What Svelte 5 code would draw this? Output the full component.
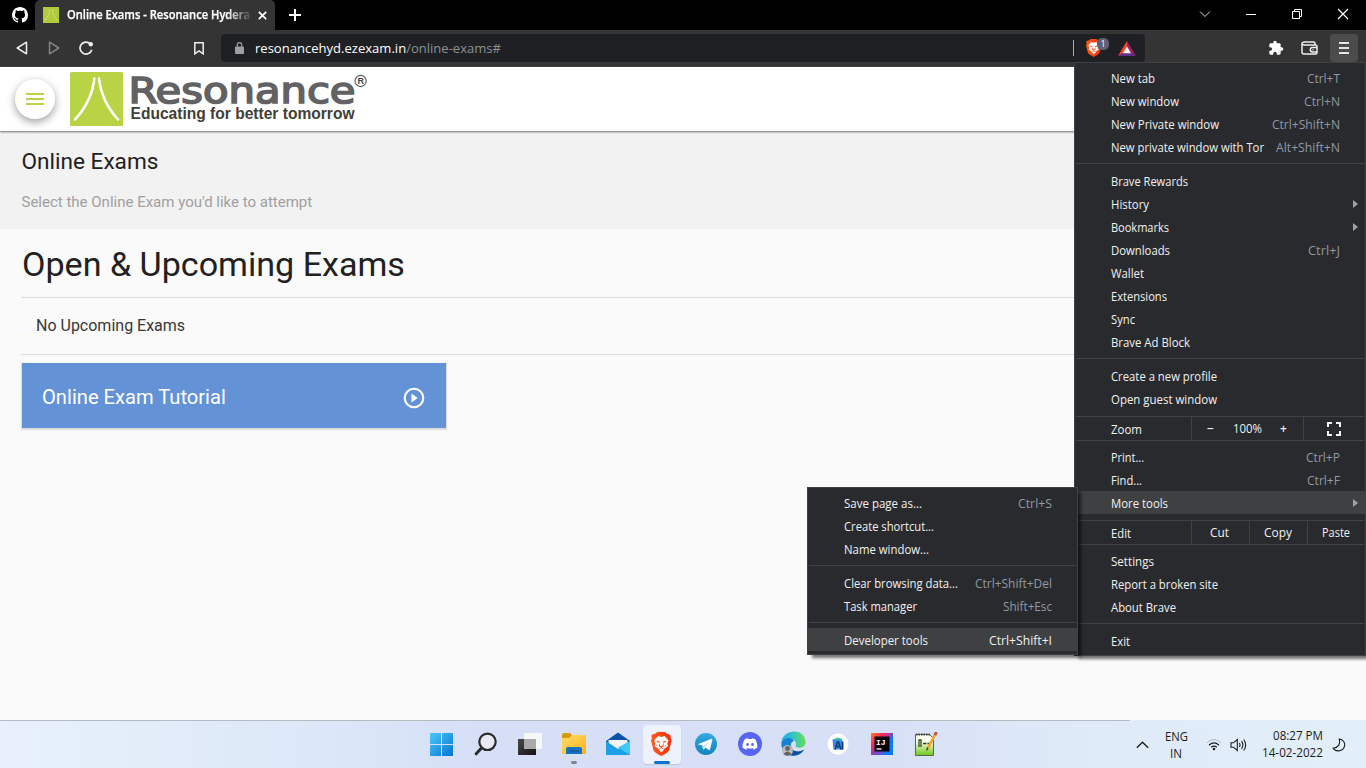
<script>
  const mainMenu = [
    { label: 'New tab', key: 'Ctrl+T', w: 44, kw: 33 },
    { label: 'New window', key: 'Ctrl+N', w: 68, kw: 36 },
    { label: 'New Private window', key: 'Ctrl+Shift+N', w: 108, kw: 68 },
    { label: 'New private window with Tor', key: 'Alt+Shift+N', w: 153, kw: 64 },
    { type: 'sep' },
    { label: 'Brave Rewards', w: 77 },
    { label: 'History', arrow: true, w: 38 },
    { label: 'Bookmarks', arrow: true, w: 58 },
    { label: 'Downloads', key: 'Ctrl+J', w: 59, kw: 32 },
    { label: 'Wallet', w: 33 },
    { label: 'Extensions', w: 56 },
    { label: 'Sync', w: 24 },
    { label: 'Brave Ad Block', w: 79 },
    { type: 'sep' },
    { label: 'Create a new profile', w: 106 },
    { label: 'Open guest window', w: 106 },
    { type: 'zoom' },
    { label: 'Print...', key: 'Ctrl+P', w: 33, kw: 34 },
    { label: 'Find...', key: 'Ctrl+F', w: 31, kw: 33 },
    { label: 'More tools', arrow: true, active: true, w: 57 },
    { type: 'edit' },
    { label: 'Settings', w: 43 },
    { label: 'Report a broken site', w: 107 },
    { label: 'About Brave', w: 65 },
    { type: 'sep' },
    { label: 'Exit', w: 19 }
  ];
  const subMenu = [
    { label: 'Save page as...', key: 'Ctrl+S', w: 78, kw: 34 },
    { label: 'Create shortcut...', w: 90 },
    { label: 'Name window...', w: 85 },
    { type: 'sep' },
    { label: 'Clear browsing data...', key: 'Ctrl+Shift+Del', w: 114, kw: 77 },
    { label: 'Task manager', key: 'Shift+Esc', w: 73, kw: 49 },
    { type: 'sep' },
    { label: 'Developer tools', key: 'Ctrl+Shift+I', active: true, w: 84, kw: 63 }
  ];
</script>

{#snippet fit(text, w)}
  <svg class="fit" width={w} height="17"><text x="0" y="13" textLength={w} lengthAdjust="spacingAndGlyphs">{text}</text></svg>
{/snippet}

{#snippet rows(items)}
  {#each items as it}
    {#if it.type === 'sep'}
      <div class="sep"></div>
    {:else if it.type === 'zoom'}
      <div class="split">
        <div class="name">{@render fit('Zoom', 31)}</div>
        <div class="zoomer"><span class="sign">−</span>{@render fit('100%', 29)}<span class="sign">+</span></div>
        <div class="full">
          <svg width="14" height="14" viewBox="0 0 14 14" fill="none" stroke="#f1f1f1" stroke-width="2"><path d="M1 5V1h4M9 1h4v4M13 9v4H9M5 13H1V9" /></svg>
        </div>
      </div>
    {:else if it.type === 'edit'}
      <div class="split">
        <div class="name">{@render fit('Edit', 20)}</div>
        <div class="act">{@render fit('Cut', 19)}</div>
        <div class="act">{@render fit('Copy', 28)}</div>
        <div class="act">{@render fit('Paste', 28)}</div>
      </div>
    {:else}
      <div class="item" class:active={it.active}>
        {@render fit(it.label, it.w)}
        {#if it.key}<span class="key">{@render fit(it.key, it.kw)}</span>{/if}
        {#if it.arrow}<i class="arrow"></i>{/if}
      </div>
    {/if}
  {/each}
{/snippet}

{#snippet brave(size)}
  <svg width={size * 0.86} height={size} viewBox="0 0 24 28">
    <defs><linearGradient id="bg{size}" x1="0" x2="1"><stop offset="0" stop-color="#ff5a1c" /><stop offset="1" stop-color="#f6330c" /></linearGradient></defs>
    <path fill="url(#bg{size})" d="M7.500 0h9l2.300 2.400c1.600-.4 2.700.4 4 2L23 7l1 3-3 11.500C20 24 15 26.500 12 28 9 26.500 4 24 3 21.500L0 10l1-3-.8-2.600c1.300-1.600 2.400-2.400 4-2z" />
    <path fill="#fff" d="M12 5.700l3.800-1 4.600 5.200-1.500 3.600 1 2.700-5 3.500L12 17.500l-2.900 2.200-5-3.500 1-2.700-1.500-3.600 4.600-5.200z" />
    <path fill="#fff" d="M12 18.700l3.300 2-3.300 2.900-3.300-2.900z" />
    <path fill="#f8410f" d="M6 10.200l4.200.9-.5 1.500-2.300-.5zM18 10.200l-4.200.9.500 1.500 2.300-.5zM9.600 12.600l.9 3.100 1.500.9 1.500-.9.900-3.100.4 3.700-2.800 1.800-2.800-1.800zM5.700 14.300l2.500 2.200-1.800-.5zM18.300 14.300l-2.500 2.200 1.800-.5z" />
  </svg>
{/snippet}

<div class="screen">
  <div class="tabs">
    <div class="pinned">
      <svg width="16" height="16" viewBox="0 0 16 16" fill="#fff"><path d="M8 0C3.580 0 0 3.580 0 8c0 3.540 2.290 6.530 5.470 7.590.4.070.55-.17.55-.38 0-.19-.01-.82-.01-1.490-2.010.37-2.530-.49-2.690-.94-.09-.23-.48-.94-.82-1.130-.28-.15-.68-.52-.01-.53.63-.01 1.080.58 1.230.82.72 1.210 1.870.87 2.330.66.07-.52.28-.87.51-1.070-1.780-.2-3.640-.89-3.640-3.950 0-.87.31-1.590.82-2.150-.08-.2-.36-1.020.08-2.120 0 0 .67-.21 2.200.82.64-.18 1.320-.27 2-.27s1.360.09 2 .27c1.530-1.040 2.200-.82 2.200-.82.44 1.100.16 1.920.08 2.120.51.56.82 1.270.82 2.150 0 3.070-1.870 3.750-3.650 3.950.29.25.54.73.54 1.480 0 1.070-.01 1.930-.01 2.200 0 .21.15.46.55.38A8.010 8.010 0 0 0 16 8c0-4.420-3.580-8-8-8z" /></svg>
    </div>
    <div class="tab">
      <svg width="16" height="16" viewBox="0 0 16 16"><rect width="16" height="16" fill="#b0cb3a" /><path d="M6.800 2.500Q6.500 8 1.800 13.500M9.200 2.500Q9.500 8 14.200 13.500" fill="none" stroke="#dfe9ad" stroke-dasharray="1.500 .7" /></svg>
      <div class="title"><svg class="fit" width="183" height="18"><text x="0" y="13" textLength="183" lengthAdjust="spacingAndGlyphs">Online Exams - Resonance Hydera</text></svg></div>
      <svg width="9" height="9" viewBox="0 0 9 9" stroke="#fff" stroke-width="1.700"><path d="M.8.8l7.400 7.400M8.200.8L.8 8.200" /></svg>
    </div>
    <svg class="plus" width="12" height="12" viewBox="0 0 12 12" stroke="#fff" stroke-width="2"><path d="M6 0v12M0 6h12" /></svg>
    <div class="winctl">
      <svg width="12" height="12" viewBox="0 0 12 12" fill="none" stroke="#ddd"><path d="M1 3.500l5 5 5-5" /></svg>
      <svg width="12" height="12" viewBox="0 0 12 12" stroke="#fff"><path d="M1 6.500h10" /></svg>
      <svg width="12" height="12" viewBox="0 0 12 12" fill="none" stroke="#fff"><path d="M1.500 3.500h7v7h-7zM3.500 3.500v-2h7v7h-2" /></svg>
      <svg width="12" height="12" viewBox="0 0 12 12" stroke="#fff" stroke-width="1.200"><path d="M1 1l10 10M11 1L1 11" /></svg>
    </div>
  </div>

  <div class="toolbar">
    <div class="nav">
      <svg width="12" height="14" viewBox="0 0 12 14" fill="none" stroke="#eee" stroke-width="1.500" stroke-linejoin="round"><path d="M10.500 1.200v11.600L1.200 7z" /></svg>
      <svg width="12" height="14" viewBox="0 0 12 14" fill="none" stroke="#858585" stroke-width="1.500" stroke-linejoin="round"><path d="M1.500 1.200v11.600L10.800 7z" /></svg>
      <svg width="14" height="14" viewBox="0 0 14 14" fill="none" stroke="#eee" stroke-width="1.700"><path d="M12.800 8.800A6 6 0 1 1 11.300 2.800" /><circle cx="11.800" cy="3.300" r="2.200" fill="#eee" stroke="none" /></svg>
    </div>
    <svg class="mark" width="10" height="13" viewBox="0 0 10 13" fill="none" stroke="#eee" stroke-width="1.500"><path d="M.8.800h8.400v11L5 8.800.8 11.800z" /></svg>
    <div class="url">
      <svg class="lock" width="9" height="12" viewBox="0 0 9 12"><rect y="4.500" width="9" height="7.500" rx="1" fill="#9aa0a6" /><path d="M2.300 5V2.800a2.200 2.200 0 0 1 4.400 0V5" fill="none" stroke="#9aa0a6" stroke-width="1.200" /></svg>
      <svg class="fit addr" width="248" height="20"><text x="0" y="15" textLength="246" lengthAdjust="spacingAndGlyphs">resonancehyd.ezexam.in<tspan fill="#8d9093">/online-exams#</tspan></text></svg>
      <div class="shields">
        {@render brave(18)}
        <span class="badge">1</span>
      </div>
      <svg class="bat" width="18" height="15" viewBox="0 0 18 15"><path d="M9 0L0 15l9-5.200z" fill="#ff4724" /><path d="M9 0l9 15-9-5.200z" fill="#9e1f63" /><path d="M0 15h18L9 9.500z" fill="#662d91" /><path d="M9 5.500l4 6.800H5z" fill="#fff" /></svg>
    </div>
    <div class="ext">
      <svg width="16" height="16" viewBox="0 0 24 24" fill="#fff"><path d="M20.500 11H19V7c0-1.100-.9-2-2-2h-4V3.500a2.500 2.500 0 0 0-5 0V5H4c-1.100 0-1.990.9-1.990 2v3.800H3.500a2.700 2.700 0 0 1 0 5.400H2V20c0 1.100.9 2 2 2h3.800v-1.500a2.700 2.700 0 0 1 5.400 0V22H17c1.100 0 2-.9 2-2v-4h1.500a2.500 2.500 0 0 0 0-5z" /></svg>
      <svg width="17" height="14" viewBox="0 0 17 14" fill="none" stroke="#eee" stroke-width="1.500"><path d="M14 4V2.500Q14 1 12.500 1h-9Q1 1 1 3v8q0 2 2 2h11.500q1.500 0 1.500-1.500v-6Q16 4 14.500 4h-11Q1 4 1 2.500" /><path d="M16 6.500h-4.500a2.200 2.200 0 0 0 0 4.400H16M11.500 8.700h1" /></svg>
      <div class="burger"><i></i><i></i><i></i></div>
    </div>
  </div>

  <main>
    <header>
      <div class="round"><i></i><i></i><i></i></div>
      <svg class="logo" width="300" height="56" viewBox="0 0 300 56">
        <rect x="0" y="1" width="53" height="54" rx="1.500" fill="#b8d444" />
        <path d="M24.300 7.500Q22 30 5 48.500M29 7.500Q31.300 30 48 48.500" fill="none" stroke="#fff" stroke-width="2.500" stroke-linecap="round" />
        <text class="word" x="58.500" y="32" textLength="227" lengthAdjust="spacingAndGlyphs">Resonance</text>
        <text class="motto" x="60.500" y="48" textLength="224" lengthAdjust="spacingAndGlyphs">Educating for better tomorrow</text>
        <circle cx="290.600" cy="10" r="5.600" fill="none" stroke="#555" stroke-width="1.100" />
        <text class="reg" x="290.800" y="13.400">R</text>
      </svg>
    </header>
    <section class="hero">
      <h2>Online Exams</h2>
      <p>Select the Online Exam you'd like to attempt</p>
    </section>
    <section class="content">
      <h1>Open &amp; Upcoming Exams</h1>
      <div class="none">No Upcoming Exams</div>
      <div class="card">
        <span>Online Exam Tutorial</span>
        <svg width="22" height="22" viewBox="0 0 22 22"><circle cx="11" cy="11" r="9.300" fill="none" stroke="#fff" stroke-width="2.100" /><path d="M8.500 6.500v9l6.200-4.500z" fill="#fff" /></svg>
      </div>
    </section>
  </main>

  <footer>
    <div class="apps">
      <div class="app"><svg width="24" height="24" viewBox="0 0 24 24"><defs><linearGradient id="win" x1="0" y1="0" x2="1" y2="1" ><stop offset="0" stop-color="#4cc9fb" /><stop offset="1" stop-color="#0574d1" /></linearGradient></defs><path fill="url(#win)" d="M0 1h11v11H0zM12 1h11v11H12zM0 13h11v11H0zM12 13h11v11H12z" /></svg></div>
      <div class="app"><svg width="24" height="24" viewBox="0 0 24 24" fill="none" stroke="#2b2b2e"><circle cx="13.500" cy="9.800" r="8.200" stroke-width="2.200" fill="#e7eaf5" /><path d="M7.500 16l-5.300 5.800" stroke-width="3" stroke-linecap="round" /></svg></div>
      <div class="app"><svg width="26" height="24" viewBox="0 0 26 24"><defs><linearGradient id="tk" x1="0" y1="0" x2="1" y2="1"><stop offset="0" stop-color="#4a4a4a" /><stop offset="1" stop-color="#111" /></linearGradient></defs><path d="M1 7h18v16H1z" fill="url(#tk)" /><path d="M7 1h18v16H7z" fill="#f7f7f7" /><path d="M7 7h12v10H7z" fill="#aaa" /></svg></div>
      <div class="app"><svg width="24" height="24" viewBox="0 0 24 24"><defs><linearGradient id="fo" x1="0" y1="0" x2="1" y2="1"><stop offset="0" stop-color="#ffdb6e" /><stop offset="1" stop-color="#fbb414" /></linearGradient></defs><path d="M0 3q0-2 2-2h6l3 3h-1L8 7H0z" fill="#d99a08" /><path d="M0 6h7l3-3h13q1 0 1 1v18H0z" fill="url(#fo)" /><path d="M4 22v-5q0-2 2-2h12q2 0 2 2v5z" fill="#1572c2" /><path d="M7 18.500h10v1H7z" fill="#075191" /></svg><i class="dot"></i></div>
      <div class="app"><svg width="24" height="24" viewBox="0 0 24 24"><path d="M0 9l12-8.500L24 9v5H0z" fill="#0a55a8" /><path d="M2.500 8h19v5L12 18l-9.500-5z" fill="#f3f3f3" /><path d="M0 9l12 8L24 9v14H0z" fill="#1d9fe8" /><path d="M24 9v14L12 15.500z" fill="#3dc9f6" /></svg></div>
      <div class="app current">{@render brave(24)}<i class="run"></i></div>
      <div class="app"><svg width="24" height="24" viewBox="0 0 24 24"><defs><linearGradient id="tg" x2="0" y2="1"><stop offset="0" stop-color="#35a9e1" /><stop offset="1" stop-color="#1383bb" /></linearGradient></defs><circle cx="12" cy="12" r="11" fill="url(#tg)" /><path d="M4.500 12l13-5.200c.7-.2 1 .2.8 1L16 17.600c-.2.700-.7.800-1.200.4l-3.200-2.400-1.600 1.600c-.5.500-.9.100-1-.5l-.8-3.100-3.600-1c-.6-.2-.5-.4-.1-.6z" fill="#fff" /><path d="M9 14.200l6.200-4.800-4.300 5.200-.8 2.300z" fill="#b9d9ec" /></svg></div>
      <div class="app"><svg width="24" height="24" viewBox="0 0 24 24"><circle cx="12" cy="12" r="12" fill="#5865f2" /><g transform="translate(4.500 4.500) scale(.625)"><path fill="#fff" d="M20.317 4.370a19.800 19.800 0 0 0-4.885-1.515.07.07 0 0 0-.079.037c-.21.375-.444.864-.608 1.250a18.300 18.300 0 0 0-5.487 0 12.600 12.600 0 0 0-.617-1.250.08.08 0 0 0-.079-.037A19.700 19.700 0 0 0 3.677 4.370C.533 9.046-.320 13.580.099 18.058a20 20 0 0 0 5.993 3.030c.462-.630.874-1.295 1.226-1.994a13 13 0 0 1-1.872-.892l.372-.292c3.928 1.793 8.180 1.793 12.062 0l.372.292a12.300 12.300 0 0 1-1.873.892c.36.698.772 1.362 1.225 1.993a19.800 19.800 0 0 0 6.002-3.030c.5-5.177-.838-9.674-3.289-13.687zM8.020 15.330c-1.183 0-2.157-1.085-2.157-2.419s.956-2.419 2.157-2.419c1.210 0 2.176 1.096 2.157 2.420 0 1.333-.956 2.418-2.157 2.418zm7.975 0c-1.183 0-2.157-1.085-2.157-2.419s.955-2.419 2.157-2.419c1.210 0 2.176 1.096 2.157 2.420 0 1.333-.946 2.418-2.157 2.418z" /></g></svg></div>
      <div class="app"><svg width="25" height="25" viewBox="0 0 25 25"><defs><linearGradient id="ed" x1="0" x2="1"><stop offset="0" stop-color="#22a5e6" /><stop offset=".5" stop-color="#34c6c4" /><stop offset="1" stop-color="#65e04d" /></linearGradient></defs><path d="M.5 11C2-1.500 22-4 24.500 10c.8 5-3.500 7.500-8 6.500-3-.7-1.500-1.500-1.500-4C15 8 7 5 .5 11z" fill="url(#ed)" /><path d="M.5 11C4 6 11 6 13 10c-3 .5-4 4-2 7.500 3 4.500 8 4 12 1-4 8-15 8-19 3-3-3-4-6.500-3.500-10.500z" fill="#1682d3" /><path d="M9 13c0 8 9 9 14 5.500-3 5-9 6.500-13 5.500z" fill="#0c4fa0" /><circle cx="6.500" cy="19.500" r="5.500" fill="#b9babb" /><circle cx="6.500" cy="17.500" r="2.400" fill="#66625f" /><path d="M2.500 23q4-5 8 0-4 3.500-8 0z" fill="#66625f" /></svg></div>
      <div class="app"><svg width="24" height="24" viewBox="0 0 24 24"><circle cx="12" cy="12" r="10.500" fill="#fff" /><path d="M8 8V7q4-3 8 0v2H8z" fill="#3ddc84" /><path d="M6.500 7.500h8l3 2v8h-10z" fill="#3c86f2" /><path d="M9 17.500l2.500-7.500h1l2.500 7.500M10.500 14.500h3M16.500 10v7.500" fill="none" stroke="#163a5c" stroke-width="1.400" /></svg></div>
      <div class="app"><svg width="22" height="22" viewBox="0 0 22 22"><defs><linearGradient id="ij" x1="0" y1="0" x2="1" y2="1"><stop offset="0" stop-color="#fc801d" /><stop offset=".3" stop-color="#fe2857" /><stop offset=".55" stop-color="#7a47c9" /><stop offset="1" stop-color="#087cfa" /></linearGradient></defs><path d="M0 0h22v22H0z" fill="#087cfa" /><path d="M0 0h22L12 22H0z" fill="url(#ij)" /><path d="M3.500 3.500h15v15h-15z" fill="#080508" /><path d="M5.500 16h5" stroke="#fff" stroke-width="1.300" /><text x="5" y="11.500" class="ij">IJ</text></svg></div>
      <div class="app"><svg width="24" height="24" viewBox="0 0 24 24"><defs><linearGradient id="np" x2="0" y2="1"><stop offset=".3" stop-color="#fafff0" /><stop offset="1" stop-color="#6cc815" /></linearGradient></defs><path d="M1.500 2.500h14l4 4v17h-18z" fill="url(#np)" stroke="#5d6653" /><path d="M2 2.500h15" stroke="#444" stroke-width="2" stroke-dasharray="1.500 1" /><path d="M5 15V8h2v7M9 11.500h3.500M13.500 11.500h3" stroke="#334a25" stroke-width="1.300" fill="none" /><path d="M21.500 1.500l-8 15.500" stroke="#f2a826" stroke-width="2.700" /><path d="M22.500 0l-1.600 3" stroke="#c75340" stroke-width="3" /><path d="M13.700 15.500l-1 3" stroke="#333" stroke-width="1.200" /></svg></div>
    </div>
    <div class="tray">
      <svg width="13" height="8" viewBox="0 0 13 8" fill="none" stroke="#1c1c1c" stroke-width="1.300"><path d="M.8 6.800l5.700-5.600 5.700 5.600" /></svg>
      <div class="lang">{@render fit('ENG', 23)}{@render fit('IN', 12)}</div>
      <svg class="wifi" width="16" height="13" viewBox="0 0 16 13" fill="none" stroke="#1c1c1c"><path d="M1 4.800q7-6.600 14 0" stroke="#a9b3bb" /><path d="M3 7.200q5-4.600 10 0M5.200 9.300q2.800-2.400 5.600 0" stroke-width="1.200" /><circle cx="8" cy="11" r="1.300" fill="#1c1c1c" stroke="none" /></svg>
      <svg class="vol" width="17" height="14" viewBox="0 0 17 14" fill="none" stroke="#1c1c1c" stroke-width="1.100"><path d="M1 4.800h2.500L7.300 1.500v11L3.500 9.200H1zM9.300 5q1.500 2 0 4M11.500 3.200q2.800 3.800 0 7.600M13.700 1.500q4 5.500 0 11" /></svg>
      <div class="clock">{@render fit('08:27 PM', 50)}{@render fit('14-02-2022', 61)}</div>
      <svg class="moon" width="14" height="14" viewBox="0 0 14 14" fill="none" stroke="#1c1c1c" stroke-width="1.100"><path d="M7.300 1c4 .3 6 4 5.200 7.200C11.500 13 4.500 14.800 1.200 10.300 6 10 8.500 6 7.300 1z" /></svg>
    </div>
  </footer>

  <div class="menu primary">{@render rows(mainMenu)}</div>
  <div class="menu secondary">{@render rows(subMenu)}</div>
</div>

<style>
  :global(body) { margin: 0; overflow: hidden; }
  .screen { position: relative; width: 1366px; height: 768px; display: flex; flex-direction: column; overflow: hidden; font: 12px "Open Sans", "Noto Sans", sans-serif; background: #fafafa; }
  svg { display: block; flex: none; }
  .fit { overflow: visible; fill: currentColor; }

  .tabs { height: 30px; background: #000; display: flex; align-items: center; }
  .pinned { width: 35px; padding-left: 12px; box-sizing: border-box; }
  .tab { width: 240px; height: 30px; box-sizing: border-box; padding: 0 8px; display: flex; align-items: center; background: #343434; border-radius: 5px 5px 0 0; }
  .title { width: 183px; margin: 0 8px; color: #fff; mask-image: linear-gradient(90deg, #000 160px, transparent 186px); }
  .title text { font-weight: 600; stroke: #fff; stroke-width: .25; }
  .plus { margin-left: 14px; }
  .winctl { margin-left: auto; display: flex; gap: 34px; padding-right: 17px; margin-top: -2px; }

  .toolbar { height: 36px; background: #343434; border-bottom: 1px solid #444; display: flex; align-items: center; flex: none; }
  .nav { display: flex; align-items: center; gap: 20px; padding-left: 16px; }
  .nav svg:last-child { margin-left: -1px; }
  .mark { margin-left: 101px; }
  .url { width: 924px; height: 28px; margin-left: 17px; border-radius: 4px; background: #1e2023; display: flex; align-items: center; color: #fff; font-size: 13.500px; }
  .lock { margin-left: 14px; }
  .addr { margin-left: 11px; }
  .shields { margin-left: auto; height: 16px; border-left: 1px solid #aaa; display: flex; align-items: center; padding-left: 12px; position: relative; width: 32px; }
  .badge { position: absolute; left: 23px; top: -2px; width: 12px; height: 12px; border-radius: 5px; background: #5e6175; font: 9px/12px "Open Sans", sans-serif; text-align: center; }
  .bat { margin: 0 9px 0 0; }
  .ext { margin-left: auto; display: flex; align-items: center; gap: 17px; padding-right: 8px; }
  .burger { width: 28px; height: 28px; margin-left: -5px; border-radius: 4px; background: #4c4c4c; display: flex; flex-direction: column; align-items: center; justify-content: center; gap: 3px; }
  .burger i { width: 10px; height: 2px; background: #e6e6e6; }

  main { flex: 1; display: flex; flex-direction: column; font-family: Roboto, sans-serif; color: #212121; }
  header { position: relative; height: 64px; flex: none; background: #fff; box-shadow: 0 1px 2px rgba(0,0,0,.55); display: flex; align-items: center; z-index: 1; }
  .round { width: 40px; height: 40px; margin-left: 15px; border-radius: 50%; background: #fff; box-shadow: 0 3px 9px rgba(0,0,0,.38); display: flex; flex-direction: column; align-items: center; justify-content: center; gap: 3px; }
  .round i { width: 18px; height: 2px; background: #b8d444; }
  .logo { margin-left: 15px; overflow: visible; }
  .word { font: 400 36px "DejaVu Sans", sans-serif; fill: #626264; stroke: #626264; stroke-width: 1.700; }
  .motto { font: 700 16px "Liberation Sans", sans-serif; fill: #3f4038; }
  .reg { font: 700 9px "Liberation Sans", sans-serif; fill: #444; text-anchor: middle; }
  .hero { height: 98px; box-sizing: border-box; padding: 17px 21px 0 21.500px; background: #f2f2f2; }
  h2 { margin: 0; font-size: 22.600px; line-height: 28px; font-weight: 400; }
  .hero p { margin: 16px 0 0; font-size: 15px; line-height: 20px; color: #a0a0a0; }
  .content { padding: 12px 0 0 21px; }
  h1 { margin: 0; padding: 0 0 9px 1px; font-size: 34.100px; line-height: 47px; font-weight: 400; }
  .none { height: 56px; border: solid #ddd; border-width: 1px 0; padding-left: 15px; font-size: 16px; line-height: 56px; color: #383838; }
  .card { width: 424px; height: 65px; margin: 8px 0 0 1px; box-sizing: border-box; padding: 4px 21px 0 20px; display: flex; align-items: center; justify-content: space-between; background: #6392d6; box-shadow: 0 1px 1px 1px #dedede; color: #fff; font-size: 20.150px; }
  .card span { margin-top: -2px; }

  footer { position: relative; height: 47px; flex: none; border-top: 1px solid #b5bac3; background: linear-gradient(90deg, #e8f1fb 0, #dbe7f8 25%, #d6dff6 35%, #d8e0f6 65%, #deeaf8 78%, #e2eef9 100%); display: flex; align-items: center; }
  footer::after { content: ""; position: absolute; right: 0; top: -1px; width: 236px; height: 1px; background: #e2eef9; }
  .apps { display: flex; margin-left: 419.500px; }
  .app { position: relative; width: 44px; height: 47px; display: flex; align-items: center; justify-content: center; }
  .app::before { content: ""; position: absolute; z-index: 0; }
  .app.current::before { inset: 4px 3px; background: #edf2fc; border-radius: 4px; box-shadow: 0 1px 1px #bfc8d9; }
  .app svg { position: relative; top: -1px; }
  .dot, .run { position: absolute; bottom: 4px; width: 6px; height: 3px; border-radius: 2px; background: #7f858d; }
  .run { width: 16px; background: #0a73ce; }
  .current :global(svg) { position: relative; }
  .ij { font: 700 8px "Liberation Mono", monospace; fill: #fff; }
  .tray { margin-left: auto; padding-right: 20px; display: flex; align-items: center; color: #1c1c1c; }
  .lang { width: 44px; margin-left: 5px; display: flex; flex-direction: column; align-items: center; }
  .wifi { margin-left: 8px; }
  .vol { margin-left: 8px; }
  .clock { margin-left: 15px; margin-top: -1px; display: flex; flex-direction: column; align-items: flex-end; width: 61px; }
  .moon { margin-left: 9px; }

  .menu { position: absolute; box-sizing: border-box; background: #292a2d; border: 1px solid #3f4145; padding: 3px 0; color: #f1f1f1; box-shadow: 4px 4px 3px -1px rgba(0,0,0,.55); z-index: 5; }
  .primary { left: 1074px; top: 62px; width: 292px; height: 594px; }
  .secondary { left: 807px; top: 487px; width: 271px; height: 168px; }
  .item { height: 23px; display: flex; align-items: center; padding: 1px 25.500px 0 36px; box-sizing: border-box; position: relative; }
  .key { margin-left: auto; color: #9199a3; }
  .active { background: #3f4042; }
  .active .key { color: #f1f1f1; }
  .arrow { margin: 0 -18px 0 auto; border: 4px solid transparent; border-left: 5px solid #9ea1a5; border-right: 0; }
  .sep { height: 1px; margin: 5px 1px; background: #3f4145; }
  .split { height: 25px; box-sizing: border-box; margin: 6px 1px 4px; border: solid #3f4145; border-width: 1px 0; display: flex; }
  .split > div { display: flex; align-items: center; justify-content: center; }
  .split > div + div { border-left: 1px solid #3f4145; }
  .split .name { width: 115px; box-sizing: border-box; justify-content: flex-start; padding: 2px 0 0 35px; }
  .split .zoomer { width: 110px; gap: 18px; padding-right: 1px; }
  .sign { width: 8px; text-align: center; font-weight: 600; }
  .full { flex: 1; }
  .split .act { width: 55px; padding-right: 2px; }
  .split .act:last-child { flex: 1; padding-right: 0; }
</style>
